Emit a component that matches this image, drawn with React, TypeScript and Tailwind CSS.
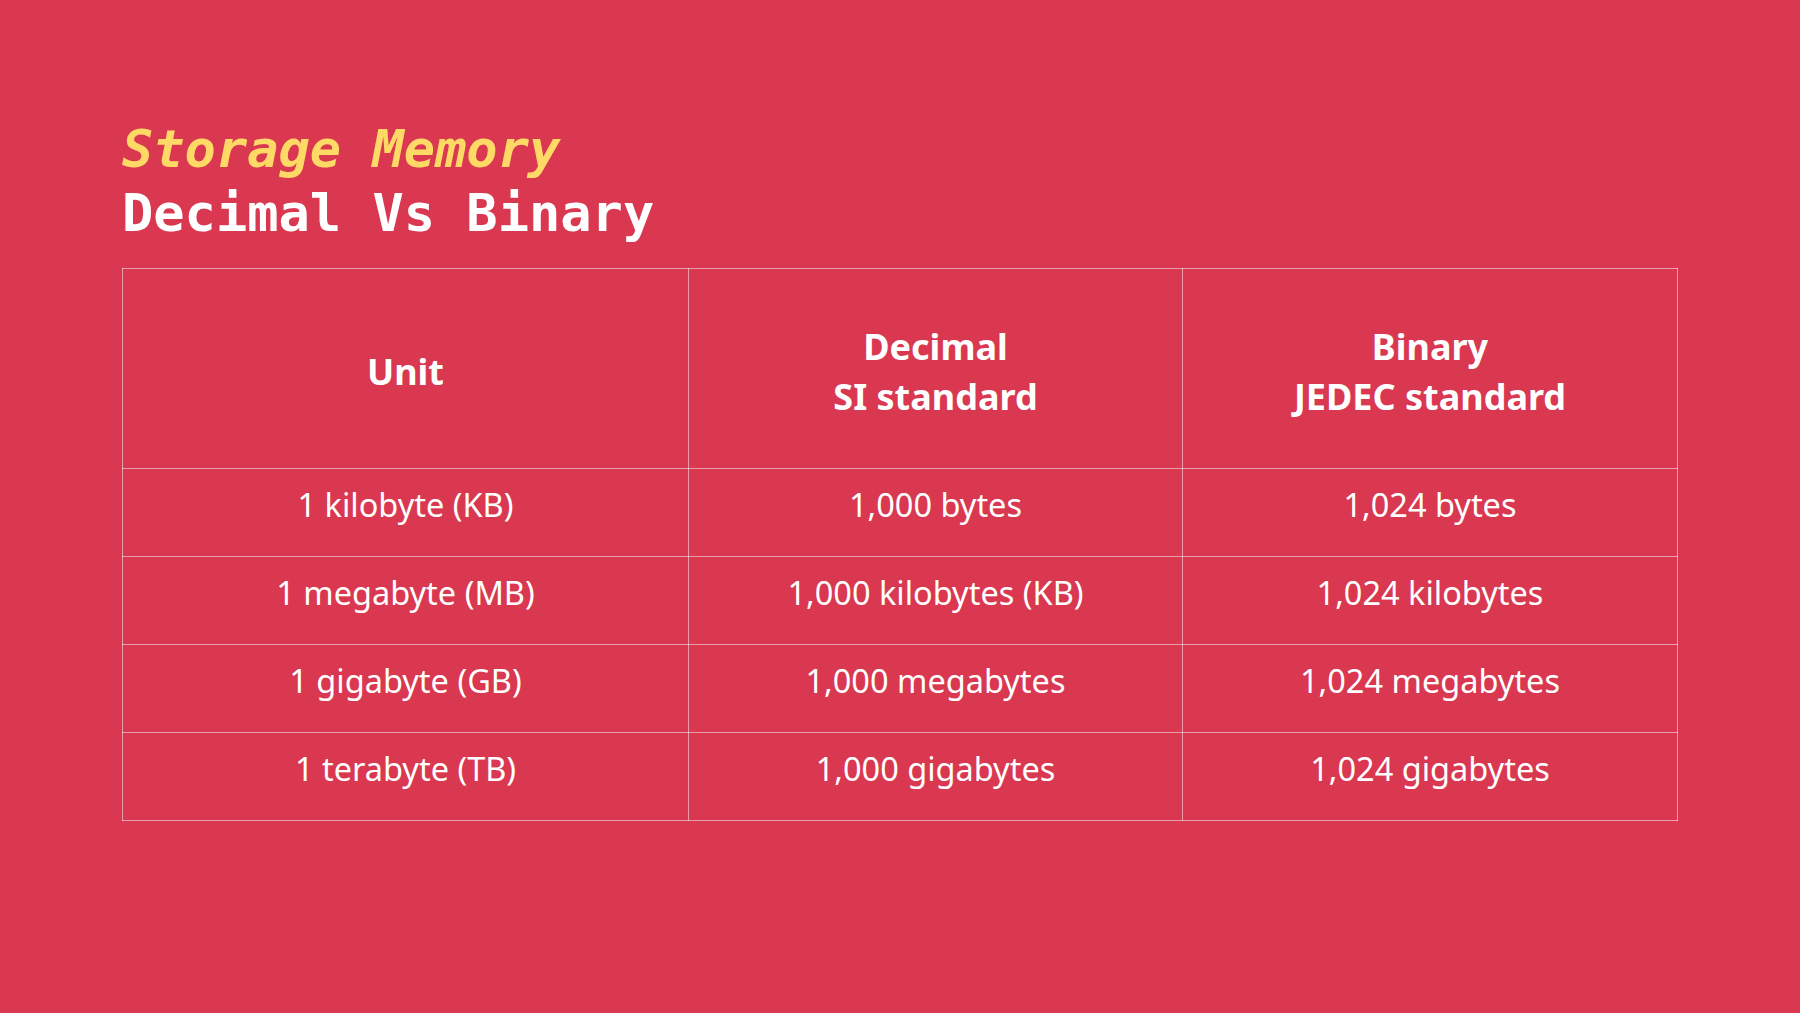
const rows = [
	["1 kilobyte (KB)", "1,000 bytes", "1,024 bytes"],
	["1 megabyte (MB)", "1,000 kilobytes (KB)", "1,024 kilobytes"],
	["1 gigabyte (GB)", "1,000 megabytes", "1,024 megabytes"],
	["1 terabyte (TB)", "1,000 gigabytes", "1,024 gigabytes"],
]

function App() {
	return (
		<div className="w-[1800px] h-[1013px] bg-[#d93850] pl-[122px] pt-[117px] overflow-hidden">
			<div className="font-['DejaVu_Sans_Mono',monospace] text-[52px] leading-[64px] font-bold">
				<div className="italic text-[#ffd966]">Storage Memory</div>
				<div className="text-white">Decimal Vs Binary</div>
			</div>
			<table className="mt-[23px] w-[1555px] table-fixed border-collapse font-['Noto_Sans',sans-serif] text-white text-[32.5px]">
				<colgroup>
					<col className="w-[566px]" />
					<col className="w-[494px]" />
					<col className="w-[495px]" />
				</colgroup>
				<thead>
					<tr className="h-[200px]">
						<th className="border border-white/50 font-bold text-[36px] leading-[50px] pt-[7px]">Unit</th>
						<th className="border border-white/50 font-bold text-[36px] leading-[50px] pt-[7px]">Decimal<br />SI standard</th>
						<th className="border border-white/50 font-bold text-[36px] leading-[50px] pt-[7px]">Binary<br />JEDEC standard</th>
					</tr>
				</thead>
				<tbody>
					{rows.map((r, i) => (
						<tr key={i} className="h-[88px]">
							{r.map((c, j) => (
								<td key={j} className="border border-white/50 text-center pb-4 leading-[44px]">{c}</td>
							))}
						</tr>
					))}
				</tbody>
			</table>
		</div>
	)
}
export default App
